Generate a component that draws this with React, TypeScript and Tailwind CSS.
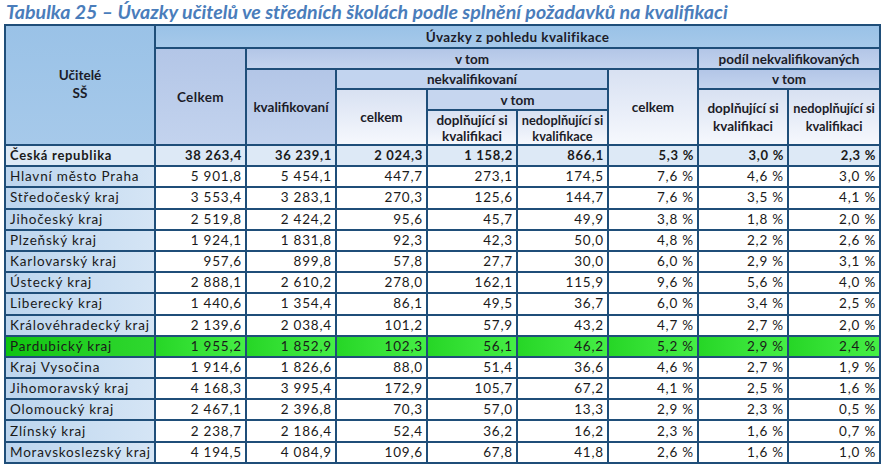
import React from 'react';

type Row = { name: string; v: string[]; total?: boolean; hl?: boolean };

const rows: Row[] = [
  { name: 'Česká republika', v: ['38 263,4', '36 239,1', '2 024,3', '1 158,2', '866,1', '5,3 %', '3,0 %', '2,3 %'], total: true },
  { name: 'Hlavní město Praha', v: ['5 901,8', '5 454,1', '447,7', '273,1', '174,5', '7,6 %', '4,6 %', '3,0 %'] },
  { name: 'Středočeský kraj', v: ['3 553,4', '3 283,1', '270,3', '125,6', '144,7', '7,6 %', '3,5 %', '4,1 %'] },
  { name: 'Jihočeský kraj', v: ['2 519,8', '2 424,2', '95,6', '45,7', '49,9', '3,8 %', '1,8 %', '2,0 %'] },
  { name: 'Plzeňský kraj', v: ['1 924,1', '1 831,8', '92,3', '42,3', '50,0', '4,8 %', '2,2 %', '2,6 %'] },
  { name: 'Karlovarský kraj', v: ['957,6', '899,8', '57,8', '27,7', '30,0', '6,0 %', '2,9 %', '3,1 %'] },
  { name: 'Ústecký kraj', v: ['2 888,1', '2 610,2', '278,0', '162,1', '115,9', '9,6 %', '5,6 %', '4,0 %'] },
  { name: 'Liberecký kraj', v: ['1 440,6', '1 354,4', '86,1', '49,5', '36,7', '6,0 %', '3,4 %', '2,5 %'] },
  { name: 'Královéhradecký kraj', v: ['2 139,6', '2 038,4', '101,2', '57,9', '43,2', '4,7 %', '2,7 %', '2,0 %'] },
  { name: 'Pardubický kraj', v: ['1 955,2', '1 852,9', '102,3', '56,1', '46,2', '5,2 %', '2,9 %', '2,4 %'], hl: true },
  { name: 'Kraj Vysočina', v: ['1 914,6', '1 826,6', '88,0', '51,4', '36,6', '4,6 %', '2,7 %', '1,9 %'] },
  { name: 'Jihomoravský kraj', v: ['4 168,3', '3 995,4', '172,9', '105,7', '67,2', '4,1 %', '2,5 %', '1,6 %'] },
  { name: 'Olomoucký kraj', v: ['2 467,1', '2 396,8', '70,3', '57,0', '13,3', '2,9 %', '2,3 %', '0,5 %'] },
  { name: 'Zlínský kraj', v: ['2 238,7', '2 186,4', '52,4', '36,2', '16,2', '2,3 %', '1,6 %', '0,7 %'] },
  { name: 'Moravskoslezský kraj', v: ['4 194,5', '4 084,9', '109,6', '67,8', '41,8', '2,6 %', '1,6 %', '1,0 %'] },
];

const colWidths = [150, 91, 90, 91, 90, 91, 90, 90, 92];

// header cell tones
const thCore = 'border-2 border-[#1f4e79] text-center align-middle font-bold text-[#1c1c28] p-0';
const thBase = `${thCore} text-[13.5px] leading-[16px]`;
const thNarrow = `${thCore} text-[12.8px]`;
const hDark = 'bg-linear-to-b from-[#9ac2e7] to-[#a6c9ea]';
const hMid = 'bg-linear-to-b from-[#b3c6e7] to-[#c3d3ee]';
const hLight = 'bg-linear-to-b from-[#d8e1f2] to-[#f6f8fd]';

export default function App() {
  return (
    <div className="w-[884px] h-[469px] bg-white overflow-hidden font-['Lato','Liberation_Sans',sans-serif]">
      <h1 className="pl-[6px] h-[24px] text-[19.6px] leading-[24px] font-bold italic text-[#4a7dbb] whitespace-nowrap">
        Tabulka 25 – Úvazky učitelů ve středních školách podle splnění požadavků na kvalifikaci
      </h1>
      <table className="ml-[4px] w-[875px] table-fixed border-collapse border-2 border-[#1f4e79]">
        <colgroup>
          {colWidths.map((w, i) => (
            <col key={i} style={{ width: w }} />
          ))}
        </colgroup>
        <thead>
          <tr className="h-[23px]">
            <th rowSpan={5} className={`${thCore} text-[13.5px] leading-[18px] ${hDark} pb-[2px]`}>
              Učitelé
              <br />
              SŠ
            </th>
            <th colSpan={8} className={`${thBase} ${hDark} tracking-[0.4px]`}>Úvazky z pohledu kvalifikace</th>
          </tr>
          <tr className="h-[21px]">
            <th rowSpan={4} className={`${thBase} ${hMid} tracking-[0.4px]`}>Celkem</th>
            <th colSpan={5} className={`${thBase} ${hMid}`}>v tom</th>
            <th colSpan={3} className={`${thBase} ${hMid}`}>podíl nekvalifikovaných</th>
          </tr>
          <tr className="h-[20px]">
            <th rowSpan={3} className={`${thBase} ${hMid}`}>kvalifikovaní</th>
            <th colSpan={3} className={`${thBase} bg-[#c2d4ef]`}>nekvalifikovaní</th>
            <th rowSpan={3} className={`${thBase} ${hLight}`}>celkem</th>
            <th colSpan={2} className={`${thBase} ${hMid}`}>v tom</th>
          </tr>
          <tr className="h-[21px]">
            <th rowSpan={2} className={`${thBase} ${hLight}`}>celkem</th>
            <th colSpan={2} className={`${thBase} bg-[#c6d6ef]`}>v tom</th>
            <th rowSpan={2} className={`${thCore} text-[13.5px] leading-[18px] ${hLight}`}>
              doplňující si
              <br />
              kvalifikaci
            </th>
            <th rowSpan={2} className={`${thNarrow} leading-[18px] ${hLight}`}>
              nedoplňující si
              <br />
              kvalifikaci
            </th>
          </tr>
          <tr className="h-[35px]">
            <th className={`${thBase} ${hLight}`}>
              doplňující si
              <br />
              kvalifikaci
            </th>
            <th className={`${thNarrow} leading-[16px] ${hLight}`}>
              nedoplňující si
              <br />
              kvalifikace
            </th>
          </tr>
        </thead>
        <tbody>
          {rows.map((r) => {
            const nameBg = r.hl
              ? 'bg-linear-to-r from-[#0fc40f] to-[#2fd82f]'
              : r.total
              ? 'bg-[#dce9f6]'
              : 'bg-linear-to-r from-[#bcd5ee] to-[#d5e5f5]';
            const cellBg = r.hl
              ? 'bg-linear-to-r from-[#26d626] to-[#45ef45]'
              : r.total
              ? 'bg-[#dde9f6]'
              : 'bg-white';
            const text = r.total
              ? 'font-bold text-[13px] tracking-[0.7px]'
              : 'font-normal text-[13.5px] tracking-[0.8px]';
            return (
              <tr key={r.name} className="h-[21.2px]">
                <td className={`border-2 border-[#1f4e79] ${nameBg} ${text} pl-[4px] text-left leading-[17px] text-[#1a1a1a] whitespace-nowrap`}>
                  {r.name}
                </td>
                {r.v.map((x, i) => (
                  <td
                    key={i}
                    className={`border-2 border-[#1f4e79] ${cellBg} ${text} pr-[3px] text-right leading-[17px] text-[#1a1a1a] whitespace-nowrap`}
                  >
                    {x}
                  </td>
                ))}
              </tr>
            );
          })}
        </tbody>
      </table>
    </div>
  );
}
